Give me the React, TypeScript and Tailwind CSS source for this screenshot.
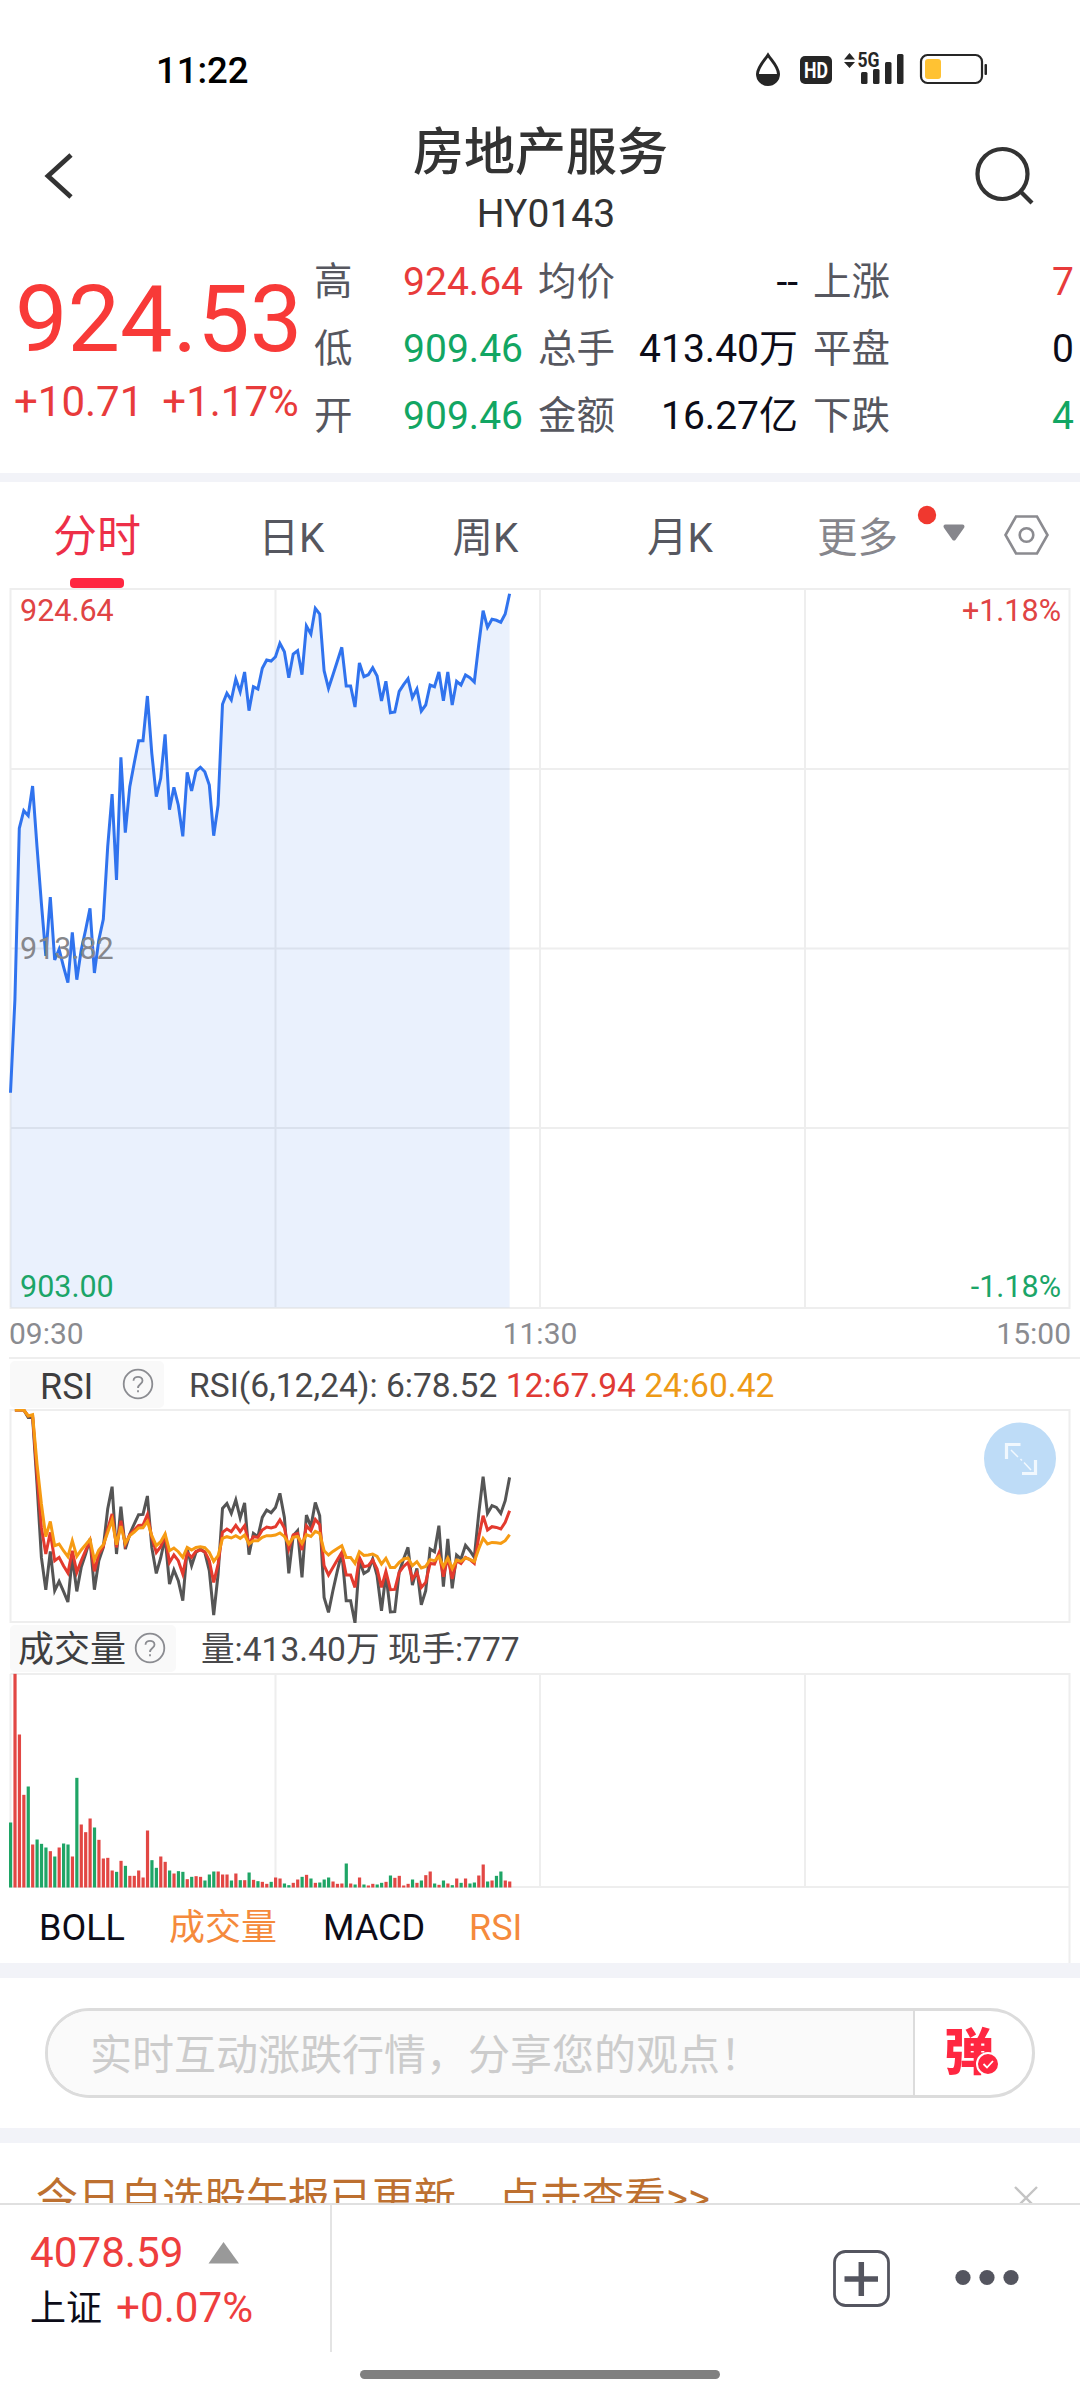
import type { ReactNode } from "react";

const STEP = 4.417;
const xAt = (i: number) => i * STEP;

// Minute samples, in thirds of a pixel below y=580.
const PRICE = [
  1538, 1260, 745, 692, 707, 618, 800, 970, 1128, 951, 1140, 1108, 1160, 1208, 1057, 1199, 1110, 1050, 985, 1179,
  1080, 1018, 800, 642, 900, 532, 758, 620, 550, 482, 482, 348, 520, 650, 595, 463, 689, 622, 675, 769,
  577, 633, 573, 562, 575, 615, 767, 675, 373, 340, 360, 297, 335, 276, 392, 320, 327, 265, 240, 243,
  230, 190, 215, 293, 222, 212, 284, 138, 162, 85, 102, 272, 325, 285, 243, 202, 318, 318, 381, 249,
  290, 284, 263, 288, 363, 304, 398, 396, 334, 314, 296, 353, 327, 393, 375, 315, 320, 276, 362, 276,
  375, 304, 315, 285, 293, 306, 195, 92, 142, 118, 121, 127, 102, 41,
];

const RSI6 = [
  418, 418, 418, 440, 440, 640, 860, 957, 842, 960, 932, 962, 994, 858, 962, 890, 850, 805, 957,
  870, 830, 715, 648, 850, 708, 835, 790, 760, 732, 731, 676, 830, 908, 862, 800, 940, 898, 930, 990,
  835, 885, 845, 835, 845, 900, 1033, 910, 713, 698, 728, 688, 742, 697, 852, 788, 798, 740, 718, 726,
  710, 668, 740, 908, 795, 780, 920, 733, 768, 695, 735, 980, 1025, 960, 900, 845, 990, 990, 1057, 870,
  908, 900, 865, 915, 1020, 910, 1024, 1023, 905, 865, 830, 943, 893, 1002, 960, 835, 843, 765, 948, 805,
  953, 853, 865, 824, 840, 860, 730, 618, 728, 705, 710, 728, 690, 620,
];
const RSI12 = [
  418, 418, 418, 436, 434, 610, 770, 850, 785, 870, 860, 885, 907, 840, 905, 870, 840, 810, 902,
  850, 828, 775, 730, 830, 750, 822, 792, 778, 764, 763, 732, 800, 845, 828, 795, 875, 853, 870, 910,
  845, 860, 842, 838, 843, 870, 935, 880, 785, 775, 783, 764, 783, 765, 820, 798, 800, 778, 769, 772,
  768, 748, 772, 835, 793, 788, 838, 765, 780, 746, 762, 885, 913, 890, 867, 845, 913, 913, 950, 860,
  888, 885, 868, 895, 950, 902, 957, 956, 905, 887, 875, 925, 905, 950, 935, 878, 880, 847, 918, 860,
  925, 870, 878, 860, 867, 878, 800, 735, 778, 768, 770, 775, 755, 720,
];
const RSI24 = [
  418, 418, 418, 436, 432, 580, 700, 798, 752, 825, 820, 840, 858, 810, 857, 838, 822, 806, 868,
  838, 822, 785, 748, 822, 766, 818, 795, 784, 772, 771, 752, 795, 825, 813, 790, 840, 832, 843, 860,
  830, 838, 830, 828, 831, 845, 872, 855, 803, 798, 802, 795, 803, 793, 820, 810, 810, 800, 795, 795,
  793, 787, 797, 820, 800, 797, 818, 792, 797, 782, 788, 840, 853, 842, 833, 825, 860, 860, 878, 843,
  854, 853, 850, 857, 880, 863, 890, 890, 875, 865, 862, 885, 873, 892, 887, 867, 870, 857, 888, 862,
  893, 868, 872, 862, 866, 873, 835, 803, 820, 815, 816, 818, 810, 792,
];

const VOLUME =
  "g606 r160 r342 r523 g498 r672 g657 g670 g681 r692 g708 r681 g669 g672 r708 g472 r612 r635 r594 g621 r658 r714 r712 r750 g754 r721 g736 r766 r766 r750 r771 r630 g719 g742 r708 r724 g750 r759 g752 g754 r776 g769 r767 r769 g780 g762 g753 r753 r762 r762 g780 r759 g779 r779 g756 r778 g782 r784 r790 g784 r771 r774 g789 g794 r787 r777 g769 r763 g774 r787 g786 g777 g771 r783 r790 r789 g729 r789 g792 r771 g792 r795 r790 g792 g787 r784 g765 r772 r766 r795 r790 g777 r787 g780 r764 r753 g789 r793 g780 r789 g794 r774 g787 r774 g789 g786 r765 r732 g783 r780 g766 g753 r780 r783".split(
    " ",
  );

const pricePoints = PRICE.map((v, i) => `${xAt(i).toFixed(1)},${(v / 3 - 8.5).toFixed(1)}`).join(" ");
const rsiPoints = (s: number[]) =>
  s.map((v, i) => `${xAt(i + 1).toFixed(1)},${(v / 3 - 138.8).toFixed(1)}`).join(" ");

function StatusBar() {
  return (
    <div className="flex h-[110px] items-start justify-between pr-[92px] pl-[156px] text-[#262626]">
      <div className="pt-[49px] text-[36.500px] leading-[44px] font-medium text-black">11:22</div>
      <svg className="mt-[48px]" width="234" height="42" viewBox="754 48 234 42">
        <path d="M768 55 C764 61 757.5 67 757.5 74 A10.5 10.5 0 0 0 778.500 74 C778.500 67 772 61 768 55Z" fill="none" stroke="#262626" strokeWidth="3" />
        <path d="M757 74 H779 A11 11 0 0 1 757 74Z" fill="#262626" />
        <rect x="800" y="56" width="32" height="28" rx="5" fill="#262626" />
        <text x="816" y="78" textAnchor="middle" fontSize="22" fontWeight="700" textLength="24" lengthAdjust="spacingAndGlyphs" fill="#fff">HD</text>
        <path d="M844 59.500 L849.500 53 L855 59.500Z M844 62 H855 L849.500 68Z" fill="#262626" />
        <text x="857.500" y="67" fontSize="21" fontWeight="700" textLength="22" lengthAdjust="spacingAndGlyphs" fill="#262626">5G</text>
        <rect x="861" y="72" width="6.500" height="12" rx="1.500" fill="#262626" />
        <rect x="873" y="69" width="6.500" height="15" rx="1.500" fill="#262626" />
        <rect x="885" y="62" width="6.500" height="22" rx="1.500" fill="#262626" />
        <rect x="897" y="54" width="6.500" height="30" rx="1.500" fill="#262626" />
        <rect x="921" y="55" width="61" height="28" rx="6.500" fill="none" stroke="#262626" strokeWidth="2.200" />
        <rect x="925" y="59" width="16" height="20" rx="3" fill="#ffc233" />
        <rect x="984.500" y="64" width="2.500" height="11" rx="1" fill="#262626" />
      </svg>
    </div>
  );
}

function Header() {
  return (
    <div className="flex h-[140px] items-start justify-between pr-[45px] pl-[44px] text-[#333]">
      <svg className="mt-[42px]" width="60" height="48" viewBox="0 0 60 48">
        <path d="M27 3 L4 24 L27 45" fill="none" stroke="#333" strokeWidth="4.800" />
      </svg>
      <div className="flex flex-col items-center pl-[2px]">
        <h1 className="mt-[13px] text-[51px] leading-[60px] font-medium">房地产服务</h1>
        <div className="mt-[8px] pl-[11px] text-[39px] leading-[46px]">HY0143</div>
      </div>
      <svg className="mt-[35px]" width="60" height="62" viewBox="0 0 60 62">
        <circle cx="27.500" cy="29" r="25" fill="none" stroke="#333" strokeWidth="4.200" />
        <path d="M45 46 L57 58" stroke="#333" strokeWidth="4.200" />
      </svg>
    </div>
  );
}

function Stat({ label, value, tone }: { label: string; value: string; tone: string }) {
  return (
    <div className="flex h-[67px] items-center justify-between">
      <span className="text-[38.500px] text-[#56575f]">{label}</span>
      <span className={tone}>{value}</span>
    </div>
  );
}

const RED = "text-[#e83b3b]";
const GREEN = "text-[#12a663]";
const INK = "text-[#0c0c18]";

function Quote() {
  return (
    <div className="flex h-[223px] text-[39px] leading-none">
      <div className="w-[314px] pl-[15px]">
        <div className="mt-[21px] text-[93.500px] leading-[96px] text-[#f83a38]">924.53</div>
        <div className={`mt-[10px] -ml-[1px] flex gap-[19px] text-[42px] leading-[50px] whitespace-nowrap ${RED}`}>
          <span>+10.71</span>
          <span>+1.17%</span>
        </div>
      </div>
      <div className="-mt-[1px] w-[209px]">
        <Stat label="高" value="924.64" tone={RED} />
        <Stat label="低" value="909.46" tone={GREEN} />
        <Stat label="开" value="909.46" tone={GREEN} />
      </div>
      <div className="-mt-[1px] ml-[15px] w-[260px]">
        <Stat label="均价" value="--" tone={INK} />
        <Stat label="总手" value="413.40万" tone={INK} />
        <Stat label="金额" value="16.27亿" tone={INK} />
      </div>
      <div className="-mt-[1px] ml-[15px] w-[261px]">
        <Stat label="上涨" value="7" tone={RED} />
        <Stat label="平盘" value="0" tone={INK} />
        <Stat label="下跌" value="4" tone={GREEN} />
      </div>
    </div>
  );
}

function PeriodTabs() {
  return (
    <div className="flex h-[106px] text-[40.500px] leading-none text-[#56575f]">
      <div className="relative flex h-[106px] w-[194px] justify-center pt-[33px] text-[44px] text-[#ed2f48]">
        <span>分时</span>
        <span className="absolute bottom-0 left-[70px] h-[10px] w-[54px] rounded-[4px] bg-[#ff2741]" />
      </div>
      <div className="w-[195px] pt-[36px] text-center">日K</div>
      <div className="w-[193px] pt-[36px] text-center">周K</div>
      <div className="w-[196px] pt-[36px] text-center">月K</div>
      <div className="w-[122px] pt-[36px] pl-[39px] text-[#86868c]">更多</div>
      <svg className="ml-[14px]" width="150" height="90" viewBox="914 482 150 90">
        <circle cx="927" cy="515" r="9.200" fill="#f0382f" />
        <path d="M945.500 526.500 H962.500 L954 538.500Z" fill="#86868c" stroke="#86868c" strokeWidth="4" strokeLinejoin="round" />
        <path d="M1005.500 535 L1016 516.500 H1037 L1047.500 535 L1037 553.500 H1016Z" fill="none" stroke="#8b8b90" strokeWidth="2.600" />
        <circle cx="1026.500" cy="535" r="6.800" fill="none" stroke="#8b8b90" strokeWidth="2.600" />
      </svg>
    </div>
  );
}

function PriceChart() {
  return (
    <div className="relative ml-[9px] h-[721px] text-[30.500px] leading-[36px]">
      <svg width="1063" height="721" viewBox="-1.500 -0.500 1063 721">
        <path d="M0 0.500 H1059 V719.500 H0Z M0 180.500 H1059 M0 360 H1059 M0 539.500 H1059 M265 0 V719 M529.500 0 V719 M794.500 0 V719" fill="none" stroke="#eee" strokeWidth="2" />
        <polygon points={`0,719 ${pricePoints} ${xAt(113)},719`} fill="#2f72f0" fillOpacity="0.1" />
        <polyline points={pricePoints} fill="none" stroke="#3073ee" strokeWidth="3" />
      </svg>
      <span className="absolute top-[5px] left-[11px] text-[#e04444]">924.64</span>
      <span className="absolute top-[5px] right-[19px] text-[#e04444]">+1.18%</span>
      <span className="absolute top-[343px] left-[11px] text-[#86878c]">913.82</span>
      <span className="absolute top-[681px] left-[11px] text-[#1ba568]">903.00</span>
      <span className="absolute top-[681px] right-[19px] text-[#1ba568]">-1.18%</span>
    </div>
  );
}

function TimeAxis() {
  return (
    <div className="mr-[9px] ml-[9px] flex h-[48px] items-center justify-between pt-[1px] text-[30px] leading-none text-[#8a8b90]">
      <span>09:30</span>
      <span>11:30</span>
      <span>15:00</span>
    </div>
  );
}

function Help() {
  return (
    <svg width="32" height="32" viewBox="0 0 32 32" fill="none" stroke="#8b8c91">
      <circle cx="16" cy="16" r="14.300" strokeWidth="1.800" />
      <path d="M11.500 12.800 C11.500 7.500 20.500 7.500 20.500 12.800 C20.500 16 16 16 16 20" strokeWidth="1.800" />
      <path d="M16 22.300 V24.300" strokeWidth="1.800" />
    </svg>
  );
}

function PaneHeader({ chip, children }: { chip: ReactNode; children: ReactNode }) {
  return (
    <div className="flex h-[50px] items-center pl-[10px] text-[33.600px] leading-none whitespace-nowrap text-[#48484a]">
      {chip}
      {children}
    </div>
  );
}

function RsiPane() {
  return (
    <>
      <div className="ml-[9px] h-[2px] bg-[#eee]" />
      <PaneHeader
        chip={
          <div className="mr-[25px] flex h-[47px] w-[154px] items-center justify-between rounded-[5px] bg-[#f9f9f9] pr-[10px] pl-[30px] text-[36px] text-[#3e3e40]">
            <span className="pt-[5px]">RSI</span>
            <Help />
          </div>
        }
      >
        <span className="pt-[4px]">
          RSI(6,12,24): 6:78.52 <span className="text-[#e03a34]">12:67.94</span>{" "}
          <span className="text-[#ee9a17]">24:60.42</span>
        </span>
      </PaneHeader>
      <div className="relative ml-[9px] h-[214px]">
        <svg width="1063" height="214" viewBox="-1.500 -0.500 1063 214">
          <path d="M0 0.500 H1059 V212.500 H0Z" fill="none" stroke="#eee" strokeWidth="2" />
          <polyline points={rsiPoints(RSI6)} fill="none" stroke="#555" strokeWidth="3" />
          <polyline points={rsiPoints(RSI12)} fill="none" stroke="#e33a2e" strokeWidth="3" />
          <polyline points={rsiPoints(RSI24)} fill="none" stroke="#f69b13" strokeWidth="3" />
        </svg>
        <svg className="absolute top-[13px] right-[24px]" width="72" height="73" viewBox="0 0 72 73">
          <circle cx="36" cy="36.500" r="36" fill="#bedcf7" />
          <path d="M22.500 37 V22.500 H36.500 M38 51.500 H51.500 V38" fill="none" stroke="#f1f8fe" strokeWidth="3.200" />
          <path d="M27 28 L34 35 M36.500 37 L38 38.500 M40 40.500 L47 48" fill="none" stroke="#f1f8fe" strokeWidth="1.500" />
        </svg>
      </div>
    </>
  );
}

function VolumePane() {
  return (
    <>
      <PaneHeader
        chip={
          <div className="mr-[25px] flex h-[47px] w-[166px] items-center justify-between rounded-[5px] bg-[#f9f9f9] pr-[10px] pl-[8px] text-[36px] text-[#3e3e40]">
            <span className="pt-[4px]">成交量</span>
            <Help />
          </div>
        }
      >
        <span className="pt-[4px]">量:413.40万 现手:777</span>
      </PaneHeader>
      <svg className="ml-[6px]" width="1066" height="290" viewBox="-4.500 -0.500 1066 290">
        <path d="M0 0.500 H1059 V289.500 M0 0.500 V213.500 H1059 M265 0 V213 M529.500 0 V213 M794.500 0 V213" fill="none" stroke="#eee" strokeWidth="2" />
        {VOLUME.map((v, i) => {
          const top = Number(v.slice(1)) / 3 - 53;
          return (
            <rect key={i} x={xAt(i) - 1.5} y={top} width="3.200" height={214 - top} fill={v[0] === "g" ? "#1fa566" : "#e24744"} />
          );
        })}
      </svg>
    </>
  );
}

function IndicatorTabs() {
  return (
    <div className="-mt-[76px] flex h-[76px] items-center pt-[5px] pl-[39px] text-[36px] leading-none text-[#0c0c18]">
      <span className="w-[130px]">BOLL</span>
      <span className="w-[154px] text-[#f58a3c]">成交量</span>
      <span className="w-[146px]">MACD</span>
      <span className="text-[#f58a3c]">RSI</span>
    </div>
  );
}

function CommentBox() {
  return (
    <div className="h-[150px] px-[45px] pt-[30px]">
      <div className="flex h-[90px] overflow-hidden rounded-[45px] border-[3px] border-[#dcdcdc] bg-white">
        <div className="flex w-[867px] items-center border-r-[2px] border-[#dcdcdc] bg-[#fafafa] pt-[5px] pl-[42px] text-[42px] leading-none text-[#ccc]">
          实时互动涨跌行情，分享您的观点！
        </div>
        <div className="relative flex flex-1 items-center pl-[29px] text-[50px] leading-none font-black text-[#ff2741]">
          弹
          <svg className="absolute top-[41px] left-[61px]" width="24" height="24" viewBox="0 0 24 24">
            <circle cx="12" cy="12" r="11" fill="#ff2741" stroke="#fff" strokeWidth="2" />
            <path d="M7.500 12 L11 15.500 L17 9" fill="none" stroke="#fff" strokeWidth="1.800" />
          </svg>
        </div>
      </div>
    </div>
  );
}

function Notice() {
  return (
    <div className="flex h-[60px] justify-between overflow-hidden pr-[41px] pl-[36px] text-[42px] leading-[60px] text-[#bd7030]">
      <span className="mt-[26px] whitespace-pre">今日自选股午报已更新，点击查看&gt;&gt;</span>
      <svg className="mt-[42px]" width="26" height="26" viewBox="0 0 26 26">
        <path d="M2 2 L24 24 M24 2 L2 24" stroke="#c4c4c4" strokeWidth="2.400" />
      </svg>
    </div>
  );
}

function BottomBar() {
  return (
    <div className="h-[197px] border-t-[2px] border-[#e0e0e0]">
      <div className="flex h-[147px]">
        <div className="w-[332px] border-r-[2px] border-[#e4e4e4] pt-[23px] pl-[30px] text-[42.200px] leading-[50px] text-[#ee3e3e]">
          <div className="flex items-center">
            <span>4078.59</span>
            <svg className="ml-[25px]" width="32" height="22" viewBox="0 0 32 22">
              <path d="M0.500 21.500 L15.500 0 L31 21.500Z" fill="#999" />
            </svg>
          </div>
          <div className="mt-[4px] flex items-center">
            <span className="mr-[14px] pt-[2px] text-[36px] text-[#0c0c18]">上证</span>
            <span>+0.07%</span>
          </div>
        </div>
        <svg className="ml-[500px]" width="190" height="147" viewBox="832 2205 190 147">
          <rect x="834.500" y="2251.500" width="54" height="54" rx="11" fill="none" stroke="#54555f" strokeWidth="2.800" />
          <path d="M844.500 2279 H878 M861.300 2262 V2296" stroke="#54555f" strokeWidth="5.500" />
          <circle cx="963" cy="2277.500" r="7.600" fill="#54555f" />
          <circle cx="987" cy="2277.500" r="7.600" fill="#54555f" />
          <circle cx="1011" cy="2277.500" r="7.600" fill="#54555f" />
        </svg>
      </div>
      <div className="mx-auto mt-[18px] h-[9px] w-[360px] rounded-full bg-[#808080]" />
    </div>
  );
}

export default function App() {
  return (
    <div className="h-[2400px] w-[1080px] overflow-hidden bg-white font-['Roboto','Noto_Sans_CJK_SC',sans-serif] [&_svg]:block [&_svg]:shrink-0">
      <StatusBar />
      <Header />
      <Quote />
      <div className="h-[9px] bg-[#f2f3f8]" />
      <PeriodTabs />
      <PriceChart />
      <TimeAxis />
      <RsiPane />
      <VolumePane />
      <IndicatorTabs />
      <div className="h-[15px] bg-[#f2f3f8]" />
      <CommentBox />
      <div className="h-[15px] bg-[#f2f3f8]" />
      <Notice />
      <BottomBar />
    </div>
  );
}
